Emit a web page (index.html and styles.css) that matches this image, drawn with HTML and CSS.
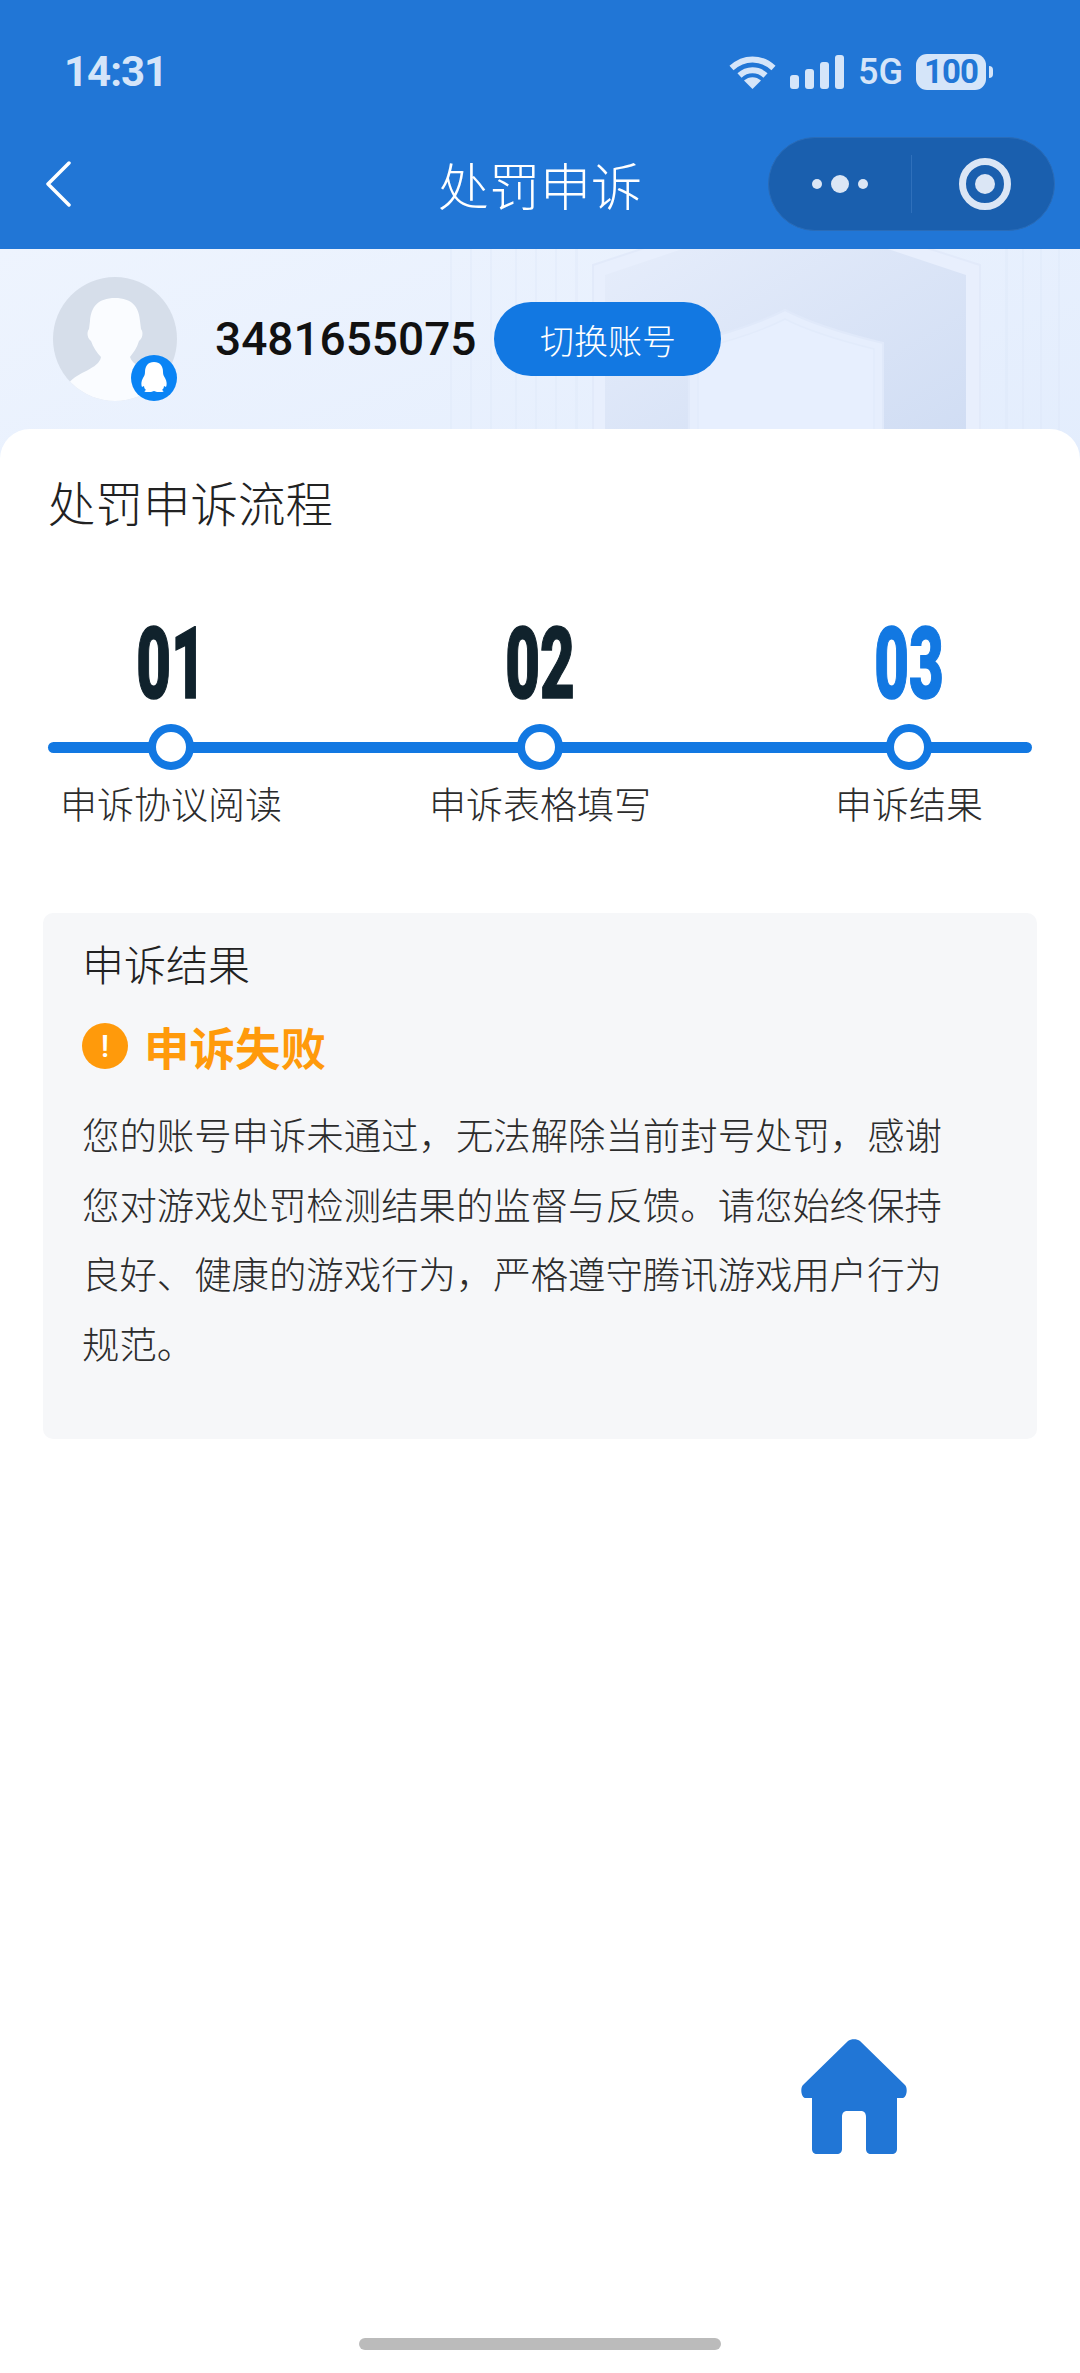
FILE: index.html
```html
<!DOCTYPE html>
<html lang="zh-CN">
<head>
    <meta charset="UTF-8">
    <meta name="viewport" content="width=device-width, initial-scale=1.0">
    <title>处罚申诉</title>
    <link rel="stylesheet" href="styles.css">
</head>
<body>
    <div class="page">
        <header class="topbar">
            <div class="status">
                <span class="time">14:31</span>
                <div class="status-icons">
                    <svg class="wifi" width="47" height="34" viewBox="0 0 47 34" fill="none" stroke="#d5e5f9" stroke-width="6">
                        <path d="M2.500 13C15 1.500 32 1.500 44.500 13"/>
                        <path d="M10.500 20.500C18 13.500 29 13.500 36.500 20.500"/>
                        <path d="M23.500 34L15 25.500C20 21 27 21 32 25.500Z" fill="#d5e5f9" stroke="none"/>
                    </svg>
                    <div class="signal">
                        <i class="bar-1"></i><i class="bar-2"></i><i class="bar-3"></i><i class="bar-4"></i>
                    </div>
                    <span class="net">5G</span>
                    <div class="battery"><span class="level">100</span><i class="tip"></i></div>
                </div>
            </div>
            <nav class="nav">
                <svg class="back" width="26" height="46" viewBox="0 0 26 46" fill="none" stroke="#fff" stroke-width="3.500" stroke-linecap="round" stroke-linejoin="round">
                    <path d="M24 2L3 23L24 44"/>
                </svg>
                <h1 class="nav-title">处罚申诉</h1>
                <div class="capsule">
                    <div class="capsule-part">
                        <i class="dot"></i><i class="dot dot-big"></i><i class="dot"></i>
                    </div>
                    <div class="capsule-line"></div>
                    <div class="capsule-part">
                        <div class="ring"><i></i></div>
                    </div>
                </div>
            </nav>
        </header>

        <section class="banner">
            <svg class="banner-bg" width="1080" height="210" viewBox="0 0 1080 210">
                <g fill="#d8e3f6" opacity=".22">
                    <rect x="450" width="2" height="210"/><rect x="470" width="2" height="210"/>
                    <rect x="490" width="2" height="210"/><rect x="515" width="2" height="210"/>
                    <rect x="535" width="2" height="210"/><rect x="555" width="2" height="210"/>
                    <rect x="575" width="3" height="210"/><rect x="1005" width="3" height="210"/>
                    <rect x="1022" width="2" height="210"/><rect x="1040" width="2" height="210"/>
                    <rect x="1058" width="2" height="210"/>
                </g>
                <path d="M593 210V16L690 -16H880L980 16V210Z" fill="#e8effd" stroke="#e2eafa" stroke-width="2"/>
                <path d="M605 210V26L700 -6H870L966 26V210Z" fill="url(#shield)"/>
                <path d="M689 210V94C725 85 758 75 785 61C812 75 845 85 883 94V210Z" fill="#e6eefd" stroke="#e0e9fa" stroke-width="2"/>
                <path d="M698 210V100C730 92 760 83 785 70C810 83 842 92 874 100V210Z" fill="#e7effe" stroke="#e2ebfb" stroke-width="1.500"/>
                <defs>
                    <linearGradient id="shield" x1="0" y1="0" x2="1" y2="1">
                        <stop offset="0" stop-color="#e6edfb"/>
                        <stop offset="1" stop-color="#cfdcf3"/>
                    </linearGradient>
                </defs>
            </svg>
            <div class="user">
                <div class="avatar">
                    <svg width="124" height="124" viewBox="0 0 124 124">
                        <clipPath id="avatar-clip"><circle cx="62" cy="62" r="62"/></clipPath>
                        <circle cx="62" cy="62" r="62" fill="#d6deea"/>
                        <path clip-path="url(#avatar-clip)" fill="#fafcff" d="M62 21C79 21 86 30 87 44L88 52C91 56 89 62 86 64C84 71 80 76 77 80C79 88 92 92 106 100V124H16V106C24 95 46 92 48 80C44 76 40 70 38 64C35 62 33 56 36 52L37 44C38 30 45 21 62 21Z"/>
                    </svg>
                    <svg class="badge" width="46" height="46" viewBox="0 0 46 46">
                        <circle cx="23" cy="23" r="23" fill="#0a84f5"/>
                        <path fill="#fff" d="M23 7C29 7 32 11 32 17C32 20 33 21 34 23C36 26 36 30 35 32L33 31C33 33 32 34 31 35C33 36 33 37 31 37H26L23 36L20 37H15C13 37 13 36 15 35C14 34 13 33 13 31L11 32C10 30 10 26 12 23C13 21 14 20 14 17C14 11 17 7 23 7Z"/>
                    </svg>
                </div>
                <span class="qq">3481655075</span>
                <button class="switch">切换账号</button>
            </div>
        </section>

        <main class="card">
            <h2 class="card-title">处罚申诉流程</h2>
            <div class="steps">
                <div class="step">
                    <div class="step-num">01</div>
                    <div class="step-dot"></div>
                    <div class="step-name">申诉协议阅读</div>
                </div>
                <div class="step">
                    <div class="step-num">02</div>
                    <div class="step-dot"></div>
                    <div class="step-name">申诉表格填写</div>
                </div>
                <div class="step">
                    <div class="step-num current">03</div>
                    <div class="step-dot"></div>
                    <div class="step-name">申诉结果</div>
                </div>
            </div>

            <div class="result">
                <h3 class="result-title">申诉结果</h3>
                <div class="result-state">
                    <span class="warn">!</span>
                    <span class="state-text">申诉失败</span>
                </div>
                <p class="result-text">您的账号申诉未通过，无法解除当前封号处罚，感谢您对游戏处罚检测结果的监督与反馈。请您始终保持良好、健康的游戏行为，严格遵守腾讯游戏用户行为规范。</p>
            </div>

            <svg class="home" width="106" height="115" viewBox="0 0 106 115">
                <path fill="#2176d6" d="M47 2C50 -0.500 56 -0.500 59 2L104 46C107 49 106 59 101 59H96V110C96 113 94 115 91 115H70C67 115 65 113 65 110V78C65 74 63 72 60 72H46C43 72 41 74 41 78V110C41 113 39 115 36 115H16C13 115 11 113 11 110V59H5C0 59 -1 49 2 46Z"/>
            </svg>
            <div class="home-bar"></div>
        </main>
    </div>
</body>
</html>
```

FILE: styles.css
```css
*{
    box-sizing:border-box;
}
body{
    margin:0;
    font-family:"Noto Sans CJK SC", "Noto Sans", sans-serif;
    background-color:#fff;
}
h1,h2,h3,p{
    margin:0;
    font-weight:300;
}
i{
    display:block;
}
.page{
    width:1080px;
    height:2373px;
    display:flex;
    flex-direction:column;
    overflow:hidden;
}

/* top bar */
.topbar{
    height:249px;
    background-color:#2176d6;
}
.status{
    height:137px;
    padding:54px 87px 0 64px;
    display:flex;
    justify-content:space-between;
    align-items:flex-start;
    color:#d5e5f9;
}
.time{
    font-family:Roboto, sans-serif;
    font-weight:700;
    font-size:42px;
    line-height:36px;
    letter-spacing:-1px;
}
.status-icons{
    display:flex;
    align-items:center;
    height:36px;
}
.wifi{
    margin-right:14px;
}
.signal{
    display:flex;
    align-items:flex-end;
    gap:6px;
    height:34px;
    margin-right:14px;
}
.signal i{
    width:9px;
    background-color:#d5e5f9;
    border-radius:3px;
}
.bar-1{height:14px;}
.bar-2{height:20px;}
.bar-3{height:27px;}
.bar-4{height:34px;}
.net{
    font-family:Roboto, sans-serif;
    font-weight:500;
    font-size:36px;
    line-height:36px;
    margin-right:13px;
}
.battery{
    display:flex;
    align-items:center;
}
.level{
    width:70px;
    height:36px;
    background-color:#d5e5f9;
    border-radius:11px;
    color:#2176d6;
    font-family:Roboto, sans-serif;
    font-weight:700;
    font-size:33px;
    line-height:36px;
    text-align:center;
    letter-spacing:-1px;
}
.tip{
    width:4px;
    height:12px;
    margin-left:3px;
    background-color:#d5e5f9;
    border-radius:0 6px 6px 0;
}
.nav{
    height:112px;
    padding:0 25px 18px;
    display:grid;
    grid-template-columns:1fr auto 1fr;
    align-items:center;
    color:#fff;
}
.back{
    margin-left:20px;
}
.nav-title{
    font-size:51px;
    line-height:70px;
}
.capsule{
    justify-self:end;
    width:287px;
    height:94px;
    border-radius:47px;
    background-color:#1a5fae;
    border:1px solid #2a6cb8;
    display:flex;
    align-items:center;
}
.capsule-part{
    flex:1;
    display:flex;
    justify-content:center;
    align-items:center;
    gap:9px;
}
.capsule-line{
    width:1px;
    height:58px;
    background-color:#2f70bb;
}
.dot{
    width:10px;
    height:10px;
    border-radius:50%;
    background-color:#dbe6f5;
}
.dot-big{
    width:18px;
    height:18px;
}
.ring{
    width:52px;
    height:52px;
    margin-left:3px;
    border:7px solid #dbe6f5;
    border-radius:50%;
    display:flex;
    justify-content:center;
    align-items:center;
}
.ring i{
    width:20px;
    height:20px;
    border-radius:50%;
    background-color:#dbe6f5;
}

/* account banner */
.banner{
    position:relative;
    height:210px;
    margin-bottom:-30px;
    background:linear-gradient(160deg, #eef4fe, #e3edfd);
}
.banner-bg{
    position:absolute;
    left:0;
    top:0;
}
.user{
    position:relative;
    display:flex;
    align-items:center;
    padding:28px 0 0 53px;
}
.avatar{
    position:relative;
    width:124px;
    height:124px;
    margin-right:38px;
}
.avatar svg{
    display:block;
}
.badge{
    position:absolute;
    right:0;
    bottom:0;
}
.qq{
    font-family:Roboto, sans-serif;
    font-weight:500;
    font-size:46px;
    color:#111;
    margin-right:18px;
}
.switch{
    width:227px;
    height:74px;
    border:none;
    border-radius:37px;
    background-color:#1278e2;
    color:#fff;
    font-family:inherit;
    font-weight:300;
    font-size:34px;
    padding:0;
}

/* card */
.card{
    position:relative;
    flex:1;
    display:flex;
    flex-direction:column;
    background-color:#fff;
    border-radius:30px 30px 0 0;
    padding:0 43px;
}
.card-title{
    font-size:47.500px;
    line-height:68px;
    margin:39px 0 0 5px;
    color:#222;
}
.steps{
    position:relative;
    display:flex;
    justify-content:space-between;
    margin:90px 5px 0 5px;
}
.steps::before{
    content:"";
    position:absolute;
    left:0;
    right:0;
    top:116px;
    height:11px;
    border-radius:6px;
    background-color:#1278e2;
}
.step{
    position:relative;
    width:246px;
    display:flex;
    flex-direction:column;
    align-items:center;
}
.step-num{
    height:98px;
    font-family:Roboto, sans-serif;
    font-weight:900;
    font-size:100px;
    line-height:76px;
    color:#10222c;
    -webkit-text-stroke:1.500px #10222c;
    transform:scaleX(.6);
}
.step-num.current{
    color:#1278e2;
    -webkit-text-stroke-color:#1278e2;
}
.step-dot{
    width:46px;
    height:46px;
    border:8px solid #1278e2;
    border-radius:50%;
    background-color:#fff;
}
.step-name{
    margin-top:8px;
    font-size:37px;
    font-weight:300;
    line-height:50px;
    color:#2c2c2c;
    white-space:nowrap;
}

/* result box */
.result{
    margin-top:85px;
    height:526px;
    padding:23px 90px 0 39px;
    background-color:#f6f7f9;
    border-radius:10px;
}
.result-title{
    font-size:42px;
    line-height:54px;
    color:#222;
}
.result-state{
    display:flex;
    align-items:center;
    margin-top:26px;
    gap:16px;
}
.warn{
    width:46px;
    height:46px;
    border-radius:50%;
    background-color:#ff9a0b;
    color:#fff;
    font-family:Roboto, sans-serif;
    font-weight:500;
    font-size:32px;
    line-height:46px;
    text-align:center;
}
.state-text{
    font-size:45.500px;
    line-height:60px;
    font-weight:700;
    color:#ff9a0b;
}
.result-text{
    margin-top:24px;
    font-size:37.400px;
    line-height:69.600px;
    color:#2c2c2c;
}

/* bottom */
.home{
    align-self:flex-end;
    margin:auto 130px 0 0;
    filter:blur(.5px);
}
.home-bar{
    align-self:center;
    width:362px;
    height:12px;
    margin:184px 0 23px;
    border-radius:6px;
    background-color:#bbb;
}
```
